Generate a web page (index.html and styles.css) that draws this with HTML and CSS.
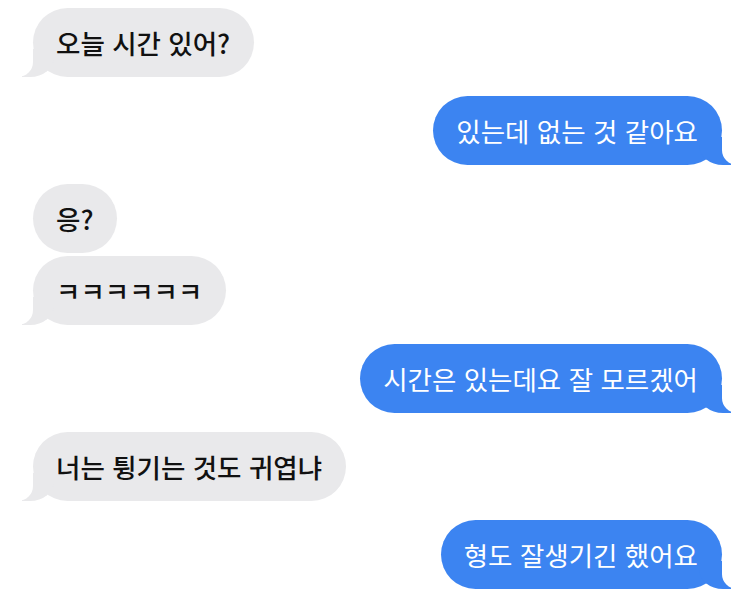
FILE: index.html
```html
<!DOCTYPE html>
<html lang="ko">
<head>
  <meta charset="UTF-8">
  <meta name="viewport" content="width=device-width, initial-scale=1.0">
  <title>메시지</title>
  <link rel="stylesheet" href="styles.css">
</head>
<body>
  <div class="chat">
    <div class="bubble them tail">오늘 시간 있어?</div>
    <div class="bubble me tail">있는데 없는 것 같아요</div>
    <div class="bubble them">응?</div>
    <div class="bubble them tail same">ㅋㅋㅋㅋㅋㅋ</div>
    <div class="bubble me tail">시간은 있는데요 잘 모르겠어</div>
    <div class="bubble them tail">너는 튕기는 것도 귀엽냐</div>
    <div class="bubble me tail">형도 잘생기긴 했어요</div>
  </div>
</body>
</html>
```

FILE: styles.css
```css
body { margin: 0; background: #fff; font-family: "Noto Sans CJK KR", "Noto Sans", sans-serif; }
.chat { display: flex; flex-direction: column; gap: 19px; padding: 8px 27px 0 33px; }
.bubble { position: relative; z-index: 0; font-size: 26.5px; line-height: 34px; padding: 18px 24px 17px 23px; border-radius: 35px; max-width: 80%; }
.them { align-self: flex-start; background: #e9e9eb; color: #111; font-weight: 500; }
.me { align-self: flex-end; background: #3c84f1; color: #fff; }
.same { margin-top: -16px; }

.tail::before, .tail::after { content: ""; position: absolute; bottom: 0; height: 28px; z-index: -1; }
.them.tail::before { left: -11px; width: 32px; background: #e9e9eb; border-bottom-right-radius: 24px 20px; }
.them.tail::after { left: -30px; width: 30px; background: #fff; border-bottom-right-radius: 15px; }
.me.tail::before { right: -9px; width: 32px; background: #3c84f1; border-bottom-left-radius: 24px 20px; }
.me.tail::after { right: -30px; width: 30px; background: #fff; border-bottom-left-radius: 15px; }
```
